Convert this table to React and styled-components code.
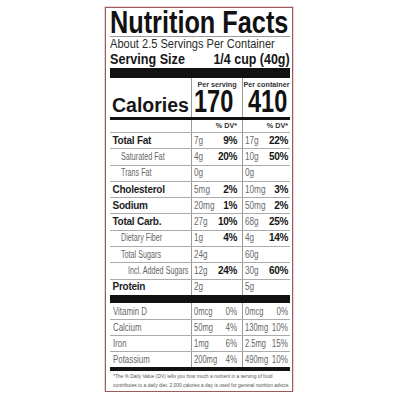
import styled, { createGlobalStyle } from "styled-components";

const nutrients = [
  { name: "Total Fat", bold: true, a: "7g", ap: "9%", b: "17g", bp: "22%" },
  { name: "Saturated Fat", indent: 8, a: "4g", ap: "20%", b: "10g", bp: "50%" },
  { name: "Trans Fat", indent: 8, a: "0g", b: "0g" },
  { name: "Cholesterol", bold: true, a: "5mg", ap: "2%", b: "10mg", bp: "3%" },
  { name: "Sodium", bold: true, a: "20mg", ap: "1%", b: "50mg", bp: "2%" },
  { name: "Total Carb.", bold: true, a: "27g", ap: "10%", b: "68g", bp: "25%" },
  { name: "Dietary Fiber", indent: 8, a: "1g", ap: "4%", b: "4g", bp: "14%" },
  { name: "Total Sugars", indent: 8, a: "24g", b: "60g" },
  { name: "Incl. Added Sugars", indent: 15, a: "12g", ap: "24%", b: "30g", bp: "60%" },
  { name: "Protein", bold: true, a: "2g", b: "5g" },
];

const vitamins = [
  { name: "Vitamin D", a: "0mcg", ap: "0%", b: "0mcg", bp: "0%" },
  { name: "Calcium", a: "50mg", ap: "4%", b: "130mg", bp: "10%" },
  { name: "Iron", a: "1mg", ap: "6%", b: "2.5mg", bp: "15%" },
  { name: "Potassium", a: "200mg", ap: "4%", b: "490mg", bp: "10%" },
];

export default function App() {
  return (
    <Page>
      <GlobalStyle />
      <Label>
        <Title>
          <Squeeze $sx={0.79}>Nutrition Facts</Squeeze>
        </Title>
        <About>
          <Squeeze $sx={0.885}>About 2.5 Servings Per Container</Squeeze>
        </About>
        <Serving>
          <Squeeze $sx={0.9}>Serving Size</Squeeze>
          <Squeeze $sx={0.89} $end>
            1/4 cup (40g)
          </Squeeze>
        </Serving>
        <Bar $h={10} $mt={1} />

        <CaloriesRow>
          <CalName>Calories</CalName>
          <AmountCell>
            <Caption>Per serving</Caption>
            <BigNum $pl={2}>
              <Squeeze $sx={0.76}>170</Squeeze>
            </BigNum>
          </AmountCell>
          <AmountCell>
            <Caption>Per container</Caption>
            <BigNum $pl={5}>
              <Squeeze $sx={0.76}>410</Squeeze>
            </BigNum>
          </AmountCell>
        </CaloriesRow>
        <Bar $h={3} />

        <DvRow>
          <div />
          <ValueCell $pr={5}>
            <span />
            <Dv>% DV*</Dv>
          </ValueCell>
          <ValueCell $pr={2}>
            <span />
            <Dv>% DV*</Dv>
          </ValueCell>
        </DvRow>

        {nutrients.map((n) => (
          <Row key={n.name} $h={16.3} $line>
            <NameCell $indent={n.indent || 0}>
              {n.bold ? (
                <BoldName>{n.name}</BoldName>
              ) : (
                <Squeeze $sx={0.72}>{n.name}</Squeeze>
              )}
            </NameCell>
            <ValueCell $pr={5}>
              <Amount>
                <Squeeze $sx={0.82}>{n.a}</Squeeze>
              </Amount>
              {n.ap && <Percent>{n.ap}</Percent>}
            </ValueCell>
            <ValueCell $pr={2}>
              <Amount>
                <Squeeze $sx={0.82}>{n.b}</Squeeze>
              </Amount>
              {n.bp && <Percent>{n.bp}</Percent>}
            </ValueCell>
          </Row>
        ))}
        <Bar $h={8} />

        {vitamins.map((v, i) => (
          <Row key={v.name} $h={16} $line={i > 0}>
            <NameCell $indent={0}>
              <VitText>
                <Squeeze $sx={0.75}>{v.name}</Squeeze>
              </VitText>
            </NameCell>
            <ValueCell $pr={5}>
              <VitText>
                <Squeeze $sx={0.72}>{v.a}</Squeeze>
              </VitText>
              <VitText $end>
                <Squeeze $sx={0.77} $end>
                  {v.ap}
                </Squeeze>
              </VitText>
            </ValueCell>
            <ValueCell $pr={2}>
              <VitText>
                <Squeeze $sx={0.72}>{v.b}</Squeeze>
              </VitText>
              <VitText $end>
                <Squeeze $sx={0.77} $end>
                  {v.bp}
                </Squeeze>
              </VitText>
            </ValueCell>
          </Row>
        ))}
        <Bar $h={4} />

        <Footnote>
          <Squeeze $sx={0.81}>
            *The % Daily Value (DV) tells you how much a nutrient in a serving of food
          </Squeeze>
          <Squeeze $sx={0.81}>
            contributes to a daily diet. 2,000 calories a day is used for general nutrition advice.
          </Squeeze>
        </Footnote>
      </Label>
    </Page>
  );
}

const GlobalStyle = createGlobalStyle`
  body {
    margin: 0;
    background: #fff;
    font-family: "Liberation Sans", Arial, sans-serif;
  }
`;

const Page = styled.div`
  padding: 7px 0 0 105px;
`;

const Label = styled.div`
  width: 188px;
  box-sizing: border-box;
  border: 1px solid #9a5c5c;
  box-shadow: 0 0 0 1px #efd3d3;
  padding: 0 2px 1px 4px;
  background: #fff;
  color: #1c1c1c;
`;

const Squeeze = styled.span`
  display: inline-block;
  white-space: nowrap;
  transform: scaleX(${(p) => p.$sx || 0.8});
  transform-origin: ${(p) => (p.$end ? "right" : "left")} center;
`;

const Title = styled.h1`
  margin: 0;
  height: 28px;
  font-size: 32px;
  line-height: 28px;
  font-weight: 700;
  color: #111;
  border-bottom: 1px solid #9a9a9a;
`;

const About = styled.div`
  font-size: 12.5px;
  line-height: 15px;
  color: #2a2a2a;
`;

const Serving = styled.div`
  display: flex;
  justify-content: space-between;
  font-size: 14px;
  line-height: 15px;
  font-weight: 700;
  color: #161616;
`;

const Bar = styled.div`
  height: ${(p) => p.$h}px;
  margin-top: ${(p) => p.$mt || 0}px;
  background: #111;
`;

const CaloriesRow = styled.div`
  display: grid;
  grid-template-columns: 81px 51px 48px;
  height: 39px;
`;

const CalName = styled.div`
  display: flex;
  align-items: flex-end;
  padding: 0 0 1.75px 2px;
  font-size: 19.5px;
  line-height: 20px;
  font-weight: 700;
  color: #161616;
`;

const AmountCell = styled.div`
  border-left: 1px solid #9a9a9a;
  padding-top: 2.5px;
`;

const Caption = styled.div`
  font-size: 7.2px;
  line-height: 8px;
  font-weight: 700;
  text-align: center;
  white-space: nowrap;
  color: #333;
`;

const BigNum = styled.div`
  padding-left: ${(p) => p.$pl}px;
  font-size: 31px;
  line-height: 26px;
  font-weight: 700;
  color: #111;
`;

const DvRow = styled.div`
  display: grid;
  grid-template-columns: 81px 51px 48px;
  height: 12px;
`;

const Dv = styled.span`
  font-size: 7.2px;
  line-height: 12px;
  font-weight: 700;
  color: #333;
  white-space: nowrap;
`;

const Row = styled.div`
  display: grid;
  grid-template-columns: 81px 51px 48px;
  height: ${(p) => p.$h}px;
  box-sizing: border-box;
  border-top: ${(p) => (p.$line ? "1px solid #ababab" : "none")};
`;

const NameCell = styled.div`
  display: flex;
  align-items: center;
  padding-left: ${(p) => 2.5 + p.$indent}px;
  font-size: 10px;
  line-height: 1;
  color: #666;
  white-space: nowrap;
`;

const BoldName = styled.span`
  font-weight: 700;
  letter-spacing: -0.25px;
  color: #1e1e1e;
`;

const ValueCell = styled.div`
  display: flex;
  justify-content: space-between;
  align-items: center;
  border-left: 1px solid #9a9a9a;
  padding: 0 ${(p) => p.$pr}px 0 1.5px;
  font-size: 10px;
  line-height: 1;
  white-space: nowrap;
`;

const Amount = styled.span`
  min-width: 0;
  color: #6a6a6a;
`;

const Percent = styled.span`
  flex-shrink: 0;
  font-weight: 700;
  letter-spacing: -0.3px;
  color: #161616;
`;

const VitText = styled.span`
  display: inline-flex;
  justify-content: ${(p) => (p.$end ? "flex-end" : "flex-start")};
  flex-shrink: ${(p) => (p.$end ? 0 : 1)};
  min-width: 0;
  font-size: 10.5px;
  line-height: 1;
  color: #666;
`;

const Footnote = styled.div`
  display: flex;
  flex-direction: column;
  padding: 1px 0 0 2.5px;
  font-size: 6px;
  line-height: 9px;
  color: #555;
`;
